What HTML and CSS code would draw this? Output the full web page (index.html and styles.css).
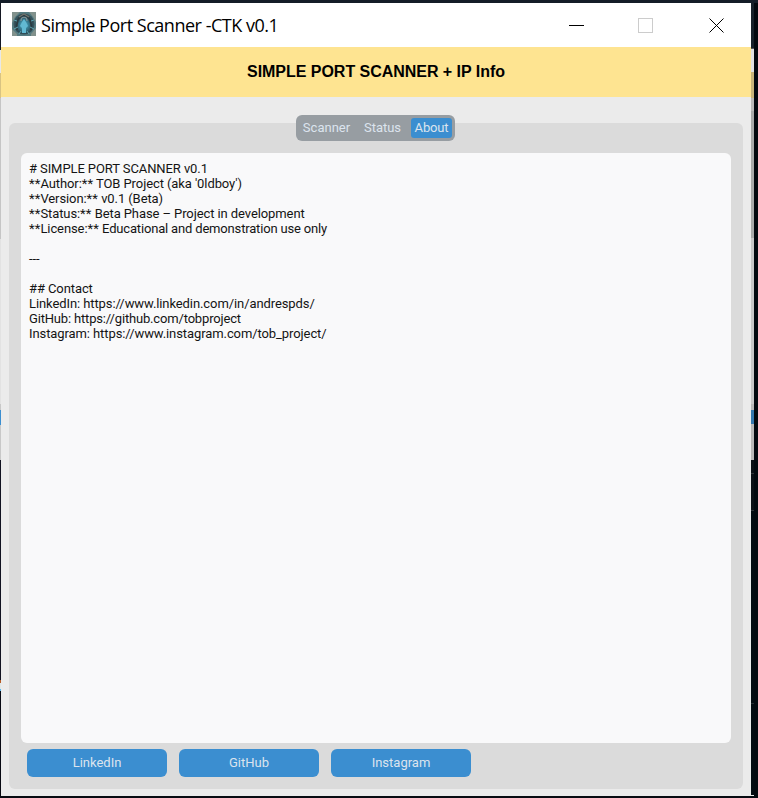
FILE: index.html
```
<!DOCTYPE html>
<html lang="en">
<head>
<meta charset="utf-8">
<title>Simple Port Scanner</title>
<link rel="stylesheet" href="styles.css">
</head>
<body>
<div class="desktop">
  <div class="edge-left"></div>
  <main class="window">
    <header class="titlebar">
      <svg class="app-icon" viewBox="0 0 24 24">
        <defs><radialGradient id="glow"><stop offset="0" stop-color="#55b5d1"/><stop offset=".5" stop-color="#397f96"/><stop offset="1" stop-color="#2b454f"/></radialGradient></defs>
        <path fill="#547a80" d="M0 0h24v24H0z"/>
        <path fill="#81918c" d="M0 0h8L3 5 0 11zM17 0h7v10l-3-5zM0 17l5 5v2H0zM24 16l-5 6v2h5z"/>
        <circle cx="12" cy="12" r="10.5" fill="#36535b"/>
        <circle cx="12" cy="13" r="9" fill="url(#glow)"/>
        <path d="M5 18C4 11 6 4 12 3c6 1 8 8 7 15" fill="none" stroke="#2b3b41" stroke-width="1.8"/>
        <path d="M7 5l5-3 5 3" fill="none" stroke="#70736d" stroke-width="1.4"/>
        <path d="M9 9c0-5 6-5 6 0" fill="none" stroke="#83979a" stroke-width="1.2"/>
        <path fill="#62b9d3" d="M12 7l2 3 2 4-2 2v5h-4v-5l-2-2 2-4z"/>
        <path d="M2 8l3 1M2 17l4-2M22 8l-3 1M22 17l-4-2M7 22l2-3M17 22l-2-3" stroke="#5ba3b0"/>
      </svg>
      <h1 class="window-title">Simple Port Scanner -CTK v0.1</h1>
      <svg class="controls" viewBox="0 0 156 16" fill="none" shape-rendering="crispEdges">
        <path d="M0 8.5h15" stroke="#000"/>
        <path d="M69.500 1.500h14v14h-14z" stroke="#ccc"/>
        <path d="M140.500 1.500l14 14M154.500 1.500l-14 14" stroke="#000" shape-rendering="auto"/>
      </svg>
    </header>
    <div class="banner">SIMPLE PORT SCANNER + IP Info</div>
    <section class="content">
      <div class="panel">
        <nav class="tabs"><span class="tab">Scanner</span><span class="tab">Status</span><span class="tab active">About</span></nav>
        <pre class="about"># SIMPLE PORT SCANNER v0.1
<span class="mark">**</span>Author:<span class="mark">**</span> TOB Project (aka '0ldboy')
<span class="mark">**</span>Version:<span class="mark">**</span> v0.1 (Beta)
<span class="mark">**</span>Status:<span class="mark">**</span> Beta Phase – Project in development
<span class="mark">**</span>License:<span class="mark">**</span> <span class="tight">Educational and demonstration use only</span>

---

## Contact
LinkedIn: https://www.linkedin.com/in/andrespds/
<span class="tight">GitHub: https://github.com/tobproject</span>
Instagram: https://www.instagram.com/tob_project/</pre>
        <div class="links"><button>LinkedIn</button><button>GitHub</button><button>Instagram</button></div>
      </div>
    </section>
  </main>
  <div class="edge-right"></div>
</div>
</body>
</html>
```
FILE: styles.css
```
* { box-sizing: border-box; }
body { margin: 0; background: #080b12; font-family: Roboto, sans-serif; }
.desktop {
  display: grid;
  grid-template-columns: 1px 750px 3px;
  width: 758px;
  height: 798px;
  padding: 3px 0 2px;
  background: linear-gradient(#141d28 0 3px, transparent 3px), linear-gradient(90deg, #080b12 0 750px, #03090f 750px);
}
.edge-left {
  background: linear-gradient(#141722 0 47px, #e8e8e8 47px 70px, #d9c382 70px 95px, #c5c5c5 95px 236px, #e2e2e2 236px 401px, #c8c8c8 401px 407px, #3b8ed0 407px 422px, #c8c8c8 422px 457px, #111321 457px 677px, #b65b25 677px 680px, #e0e7e5 680px 686px, #5ab8ef 686px 688px, #080912 688px);
}
.edge-right {
  background: linear-gradient(#17212a 0 45px, #555 45px 46px, #e1e1e1 46px 69px, #c8b57b 69px 95px, #b9b9b9 95px 108px, #a9abab 108px 235px, #c8c8c8 235px 401px, #b9b9b9 401px 407px, #3578ae 407px 421px, #b9b9b9 421px 457px, #0b1016 457px 470px, #30353a 470px 471px, #0b1016 471px 507px, #30353a 507px 508px, #030b11 508px 700px, #252d33 700px 701px, #030b11 701px 792px, #ebebeb 792px);
}
.window { display: flex; flex-direction: column; height: 793px; background: #ebebeb; }
.titlebar { display: flex; align-items: center; height: 44px; padding: 0 26px 0 11px; background: #fff; }
.app-icon { width: 24px; height: 24px; margin-top: -2px; }
.window-title { margin: 0 0 0 5px; font: 400 18px/24px "Open Sans", sans-serif; letter-spacing: -.48px; white-space: nowrap; color: #000; }
.controls { width: 156px; height: 16px; margin: -1px 0 0 auto; }
.banner { height: 50px; text-align: center; font: 700 16px/49px "Liberation Sans", Arial, sans-serif; letter-spacing: -.03px; background: #fee491; color: #000; }
.content { padding: 26px 8px 7px; flex: 1; }
.panel { display: flex; flex-direction: column; height: 666px; padding: 0 12px 12px; border-radius: 6px; background: #dbdbdb; }
.tabs { display: flex; align-self: center; width: 159px; height: 26px; margin: -8px 1px 12px 0; padding: 3px; border-radius: 6px; background: #979da2; }
.tab { height: 20px; line-height: 20px; font-size: 13px; color: #dce4ee; text-align: center; border-radius: 3px; flex: 0 0 55px; }
.tab:nth-child(2) { flex-basis: 57px; }
.tab.active { flex: 1; background: #3b8ed0; letter-spacing: -.15px; }
.about { height: 590px; margin: 0; padding: 8px; border-radius: 6px; background: #f9f9fa; color: #141414; font: 13px/15px Roboto, sans-serif; letter-spacing: -.09px; }
.mark { letter-spacing: .1px; }
.tight { letter-spacing: -.17px; }
.links { display: flex; gap: 12px; padding: 6px 6px 0; }
.links button { width: 140px; height: 28px; padding: 0; border: 0; border-radius: 6px; background: #3b8ed0; color: #dce4ee; font: 13px/28px Roboto, sans-serif; }
```
